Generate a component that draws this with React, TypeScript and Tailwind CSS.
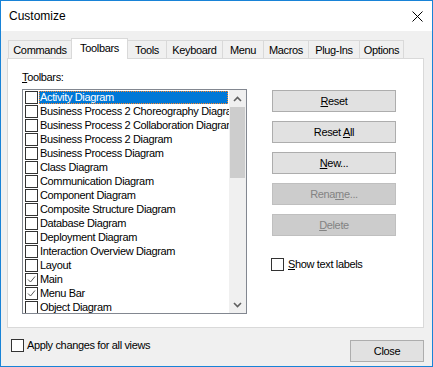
import React from "react";

const tabs = [
  { label: "Commands", w: "w-[64px]" },
  { label: "Toolbars", w: "w-[57px]", active: true },
  { label: "Tools", w: "w-[40px]" },
  { label: "Keyboard", w: "w-[57px]" },
  { label: "Menu", w: "w-[42px]" },
  { label: "Macros", w: "w-[46px]" },
  { label: "Plug-Ins", w: "w-[52px]" },
  { label: "Options", w: "w-[45px]" },
];

const toolbars = [
  { name: "Activity Diagram", selected: true },
  { name: "Business Process 2 Choreography Diagram" },
  { name: "Business Process 2 Collaboration Diagram" },
  { name: "Business Process 2 Diagram" },
  { name: "Business Process Diagram" },
  { name: "Class Diagram" },
  { name: "Communication Diagram" },
  { name: "Component Diagram" },
  { name: "Composite Structure Diagram" },
  { name: "Database Diagram" },
  { name: "Deployment Diagram" },
  { name: "Interaction Overview Diagram" },
  { name: "Layout" },
  { name: "Main", checked: true },
  { name: "Menu Bar", checked: true },
  { name: "Object Diagram" },
];

const Box = ({ checked = false }: { checked?: boolean }) => (
  <span className="w-[13px] h-[13px] shrink-0 border border-[#333333] bg-white flex items-center justify-center">
    {checked && (
      <svg width="11" height="11" viewBox="0 0 11 11">
        <polyline points="2,5.5 4.5,8 9,2.5" fill="none" stroke="#5a5a5a" strokeWidth="1" />
      </svg>
    )}
  </span>
);

const Chevron = ({ down = false }: { down?: boolean }) => (
  <svg width="9" height="6" viewBox="0 0 9 6">
    <polyline
      points={down ? "1,1 4.5,4.5 8,1" : "1,5 4.5,1.5 8,5"}
      fill="none"
      stroke="#606060"
      strokeWidth="1.6"
    />
  </svg>
);

const Button = ({ children, disabled = false, w = "w-[124px]" }: { children: React.ReactNode; disabled?: boolean; w?: string }) => (
  <div
    className={`${w} h-[22px] flex items-center justify-center border ${
      disabled ? "bg-[#cccccc] border-[#bfbfbf] text-[#838383]" : "bg-[#e1e1e1] border-[#adadad] text-black"
    }`}
  >
    <span>{children}</span>
  </div>
);

export default function App() {
  return (
    <div
      className="w-[433px] h-[367px] border border-[#1883d7] bg-[#f0f0f0] flex flex-col text-[11px] tracking-[-0.35px] text-black"
      style={{ fontFamily: '"Liberation Sans", Arial, sans-serif' }}
    >
      {/* title bar */}
      <div className="h-[30px] bg-white flex items-center justify-between pl-[8px] pr-[9px] text-[12px] tracking-normal">
        <span>Customize</span>
        <svg width="11" height="11" viewBox="0 0 11 11">
          <path d="M0.5 0.5 L10.5 10.5 M10.5 0.5 L0.5 10.5" stroke="#000" strokeWidth="1" />
        </svg>
      </div>

      <div className="flex-1 flex flex-col pl-[6px] pr-[8px] pt-[7px]">
        {/* tabs */}
        <div className="h-[20px] flex items-end pl-[1px]">
          {tabs.map((t, i) =>
            t.active ? (
              <div
                key={t.label}
                className={`${t.w} h-[21px] -mb-px -ml-px relative z-10 bg-white border border-b-0 border-[#d9d9d9] flex items-center justify-center pb-[2px]`}
              >
                {t.label}
              </div>
            ) : (
              <div
                key={t.label}
                className={`${t.w} h-[18px] ${i > 0 ? "-ml-px" : ""} bg-[#f0f0f0] border border-b-0 border-[#d9d9d9] flex items-center justify-center pt-[1px]`}
              >
                {t.label}
              </div>
            )
          )}
        </div>

        {/* panel */}
        <div className="h-[270px] border border-[#d9d9d9] bg-white flex pl-[14px]">
          <div className="pt-[10px] flex flex-col">
            <div className="h-[16px] leading-[16px] mb-[4px]">
              <u>T</u>oolbars:
            </div>
            <div className="w-[225px] h-[225px] border border-[#828790] flex">
              <div className="flex-1 overflow-hidden pl-[2px]">
                {toolbars.map((t) => (
                  <div key={t.name} className="h-[14px] flex items-center whitespace-nowrap">
                    <Box checked={t.checked} />
                    <span
                      className={`ml-[1px] h-[13px] mt-[1px] leading-[12px] pl-[1px] ${
                        t.selected
                          ? "flex-1 mr-[1px] bg-[#0078d7] text-white outline outline-1 outline-dotted outline-offset-[-1px] outline-[#ff8728]"
                          : ""
                      }`}
                    >
                      {t.name}
                    </span>
                  </div>
                ))}
              </div>
              <div className="w-[17px] bg-[#f0f0f0] flex flex-col">
                <div className="h-[17px] flex items-center justify-center">
                  <Chevron />
                </div>
                <div className="flex-1">
                  <div className="h-[71px] bg-[#cdcdcd] mx-px" />
                </div>
                <div className="h-[17px] flex items-center justify-center">
                  <Chevron down />
                </div>
              </div>
            </div>
          </div>

          <div className="ml-[25px] pt-[31px] flex flex-col">
            <div className="flex flex-col gap-[9px]">
              <Button>
                <u>R</u>eset
              </Button>
              <Button>
                Reset <u>A</u>ll
              </Button>
              <Button>
                <u>N</u>ew...
              </Button>
              <Button disabled>
                Rena<u>m</u>e...
              </Button>
              <Button disabled>
                <u>D</u>elete
              </Button>
            </div>
            <div className="mt-[22px] -ml-px flex items-center gap-[4px] leading-[13px]">
              <Box />
              <span>
                <u>S</u>how text labels
              </span>
            </div>
          </div>
        </div>

        {/* bottom row */}
        <div className="mt-[11px] flex justify-between items-start">
          <div className="ml-[4px] flex items-center gap-[3px] leading-[13px]">
            <Box />
            <span>Apply changes for all views</span>
          </div>
          <div className="mt-[1px]">
            <Button w="w-[74px]">Close</Button>
          </div>
        </div>
      </div>
    </div>
  );
}
